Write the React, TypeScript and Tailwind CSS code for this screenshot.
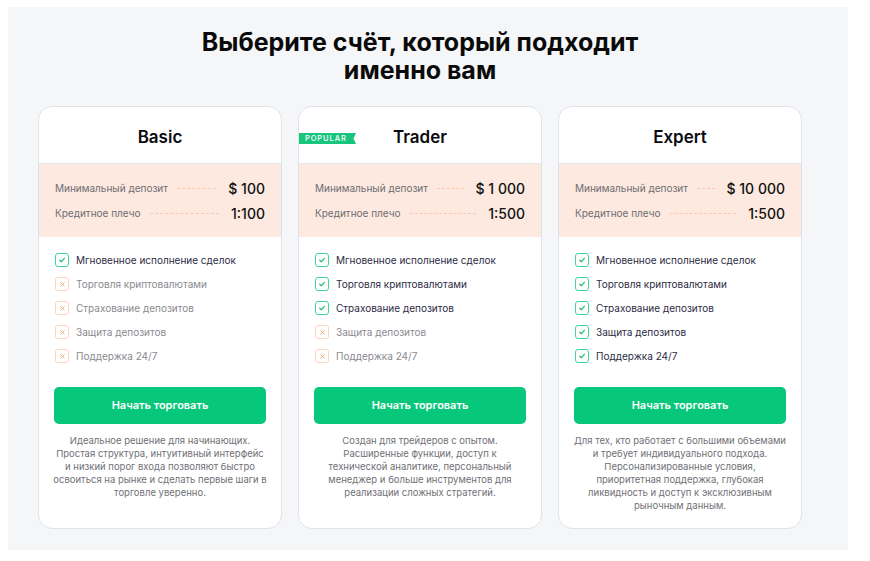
import React from "react";

type Plan = {
  name: string;
  popular?: boolean;
  deposit: string;
  leverage: string;
  features: boolean[];
  lines: string[];
};

const featureNames = [
  "Мгновенное исполнение сделок",
  "Торговля криптовалютами",
  "Страхование депозитов",
  "Защита депозитов",
  "Поддержка 24/7",
];

const plans: Plan[] = [
  {
    name: "Basic",
    deposit: "$ 100",
    leverage: "1:100",
    features: [true, false, false, false, false],
    lines: [
      "Идеальное решение для начинающих.",
      "Простая структура, интуитивный интерфейс",
      "и низкий порог входа позволяют быстро",
      "освоиться на рынке и сделать первые шаги в",
      "торговле уверенно.",
    ],
  },
  {
    name: "Trader",
    popular: true,
    deposit: "$ 1 000",
    leverage: "1:500",
    features: [true, true, true, false, false],
    lines: [
      "Создан для трейдеров с опытом.",
      "Расширенные функции, доступ к",
      "технической аналитике, персональный",
      "менеджер и больше инструментов для",
      "реализации сложных стратегий.",
    ],
  },
  {
    name: "Expert",
    deposit: "$ 10 000",
    leverage: "1:500",
    features: [true, true, true, true, true],
    lines: [
      "Для тех, кто работает с большими объемами",
      "и требует индивидуального подхода.",
      "Персонализированные условия,",
      "приоритетная поддержка, глубокая",
      "ликвидность и доступ к эксклюзивным",
      "рыночным данным.",
    ],
  },
];

function Check({ on }: { on: boolean }) {
  if (on) {
    return (
      <span className="flex h-[14px] w-[14px] shrink-0 items-center justify-center rounded-[3px] border border-[#3fd69a]">
        <svg width="8" height="8" viewBox="0 0 10 10" fill="none">
          <path d="M2 5.2l2 2 4-4.2" stroke="#17b873" strokeWidth="1.4" strokeLinecap="round" strokeLinejoin="round" />
        </svg>
      </span>
    );
  }
  return (
    <span className="flex h-[14px] w-[14px] shrink-0 items-center justify-center rounded-[3px] border border-[#fcd3bd]">
      <svg width="7" height="7" viewBox="0 0 10 10" fill="none">
        <path d="M2.5 2.5l5 5M7.5 2.5l-5 5" stroke="#f6a27a" strokeWidth="1.4" strokeLinecap="round" />
      </svg>
    </span>
  );
}

function Row({ label, value }: { label: string; value: string }) {
  return (
    <div className="flex h-[20px] items-center">
      <span className="whitespace-nowrap text-[10px] text-[#6d6d72]">{label}</span>
      <span className="ml-[9px] mr-[12px] h-0 min-w-[10px] flex-1 border-t border-dashed border-[#fbc7ae]" />
      <span className="whitespace-nowrap text-[14px] font-medium text-[#111]">{value}</span>
    </div>
  );
}

function Card({ plan }: { plan: Plan }) {
  return (
    <div className="relative flex h-[423px] w-[244px] flex-col overflow-hidden rounded-[14px] border border-[#dfe3ea] bg-white">
      {plan.popular && (
        <div className="absolute left-0 top-[26px] flex h-[11px] items-center">
          <div className="flex h-[11px] items-center bg-[#18c57c] pl-[6px] pr-[4px] text-[7.5px] font-medium tracking-[0.12em] text-white">
            POPULAR
          </div>
          <svg width="5" height="11" viewBox="0 0 5 11">
            <path d="M0 0H5L2.5 5.5L5 11H0Z" fill="#18c57c" />
          </svg>
        </div>
      )}
      <div className="flex h-[57px] items-center justify-center border-b border-[#e3e6ec] pt-[6px] text-[17px] font-semibold text-[#0b0b0f]">
        {plan.name}
      </div>
      <div className="flex h-[73px] flex-col justify-center gap-[5px] bg-[#fde9df] px-[16px]">
        <Row label="Минимальный депозит" value={plan.deposit} />
        <Row label="Кредитное плечо" value={plan.leverage} />
      </div>
      <ul className="flex flex-col gap-[10px] px-[16px] pt-[16px]">
        {featureNames.map((f, i) => (
          <li key={f} className="flex h-[14px] items-center gap-[7px]">
            <Check on={plan.features[i]} />
            <span className={`text-[10px] ${plan.features[i] ? "text-[#2c2c45]" : "text-[#8a8a90]"}`}>{f}</span>
          </li>
        ))}
      </ul>
      <div className="px-[15px] pt-[24px]">
        <button className="flex h-[37px] w-full items-center justify-center rounded-[5px] bg-[#06c77a] text-[11px] font-semibold text-white">
          Начать торговать
        </button>
      </div>
      <p className="whitespace-nowrap px-[8px] pt-[10px] text-center text-[9.5px] leading-[13px] text-[#707076]">
        {plan.lines.map((l, i) => (
          <React.Fragment key={i}>
            {l}
            {i < plan.lines.length - 1 && <br />}
          </React.Fragment>
        ))}
      </p>
    </div>
  );
}

export default function App() {
  return (
    <div className="h-[561px] w-[870px] bg-white pl-[8px] pt-[7px]" style={{ fontFamily: "Inter, 'Noto Sans', sans-serif" }}>
      <div className="h-[543px] w-[840px] bg-[#f5f6f8] pl-[30px] pt-[21px]">
        <h1 className="w-[764px] text-center text-[25px] font-bold leading-[28px] text-[#0a0a0a]">
          Выберите счёт, который подходит
          <br />
          именно вам
        </h1>
        <div className="mt-[22px] flex gap-[16px]">
          {plans.map((p) => (
            <Card key={p.name} plan={p} />
          ))}
        </div>
      </div>
    </div>
  );
}
